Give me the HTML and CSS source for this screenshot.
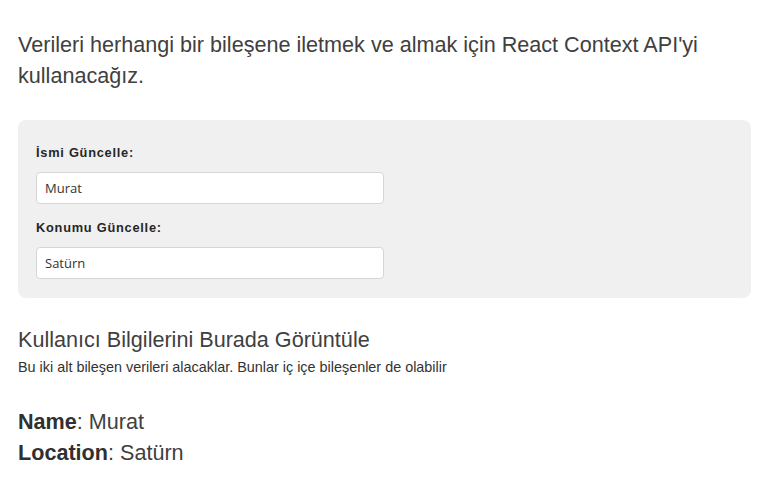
FILE: index.html
```html
<!DOCTYPE html>
<html lang="tr">
<head>
<meta charset="utf-8">
<link rel="stylesheet" href="styles.css">
</head>
<body>
<div class="page">
  <p class="lead">Verileri herhangi bir bileşene iletmek ve almak için React Context API'yi kullanacağız.</p>
  <form class="panel">
    <div class="field">
      <label class="label" for="name">İsmi Güncelle:</label>
      <input class="input" id="name" type="text" value="Murat">
    </div>
    <div class="field">
      <label class="label" for="loc">Konumu Güncelle:</label>
      <input class="input" id="loc" type="text" value="Satürn">
    </div>
  </form>
  <h3 class="title">Kullanıcı Bilgilerini Burada Görüntüle</h3>
  <p class="sub">Bu iki alt bileşen verileri alacaklar. Bunlar iç içe bileşenler de olabilir</p>
  <div class="info">
    <div class="row"><b>Name</b>: Murat</div>
    <div class="row"><b>Location</b>: Satürn</div>
  </div>
</div>
</body>
</html>
```

FILE: styles.css
```css
html, body {
  margin: 0;
  padding: 0;
  background: #fff;
}
body {
  font-family: "Liberation Sans", Arial, sans-serif;
  color: #333;
}
.page {
  padding: 30px 24px 0 18px;
}
.lead {
  margin: 0;
  font-size: 21.6px;
  line-height: 30.5px;
  color: #404040;
}
.panel {
  margin: 29px 0 0 0;
  background: #f0f0f0;
  border-radius: 8px;
  padding: 25px 18px 19px 18px;
  display: flex;
  flex-direction: column;
  gap: 16px;
}
.field {
  display: flex;
  flex-direction: column;
  gap: 11px;
}
.label {
  font-family: "Liberation Sans", Arial, sans-serif;
  font-weight: bold;
  font-size: 12.8px;
  letter-spacing: 0.75px;
  line-height: 16px;
  color: #262626;
}
.input {
  box-sizing: border-box;
  width: 348px;
  height: 32px;
  margin: 0;
  padding: 0 8px;
  border: 1px solid #d6d6d6;
  border-radius: 4px;
  background: #fff;
  font-family: "Open Sans", "DejaVu Sans", sans-serif;
  font-size: 13px;
  color: #333;
  outline: none;
}
.title {
  margin: 29px 0 0 0;
  font-size: 21.6px;
  font-weight: normal;
  line-height: 26px;
  color: #404040;
}
.sub {
  margin: 5px 0 0 0;
  font-size: 14.4px;
  line-height: 18px;
  color: #333;
}
.info {
  margin-top: 30px;
  font-size: 21.6px;
  line-height: 31.4px;
  color: #404040;
}
.info b {
  color: #303030;
}
```
